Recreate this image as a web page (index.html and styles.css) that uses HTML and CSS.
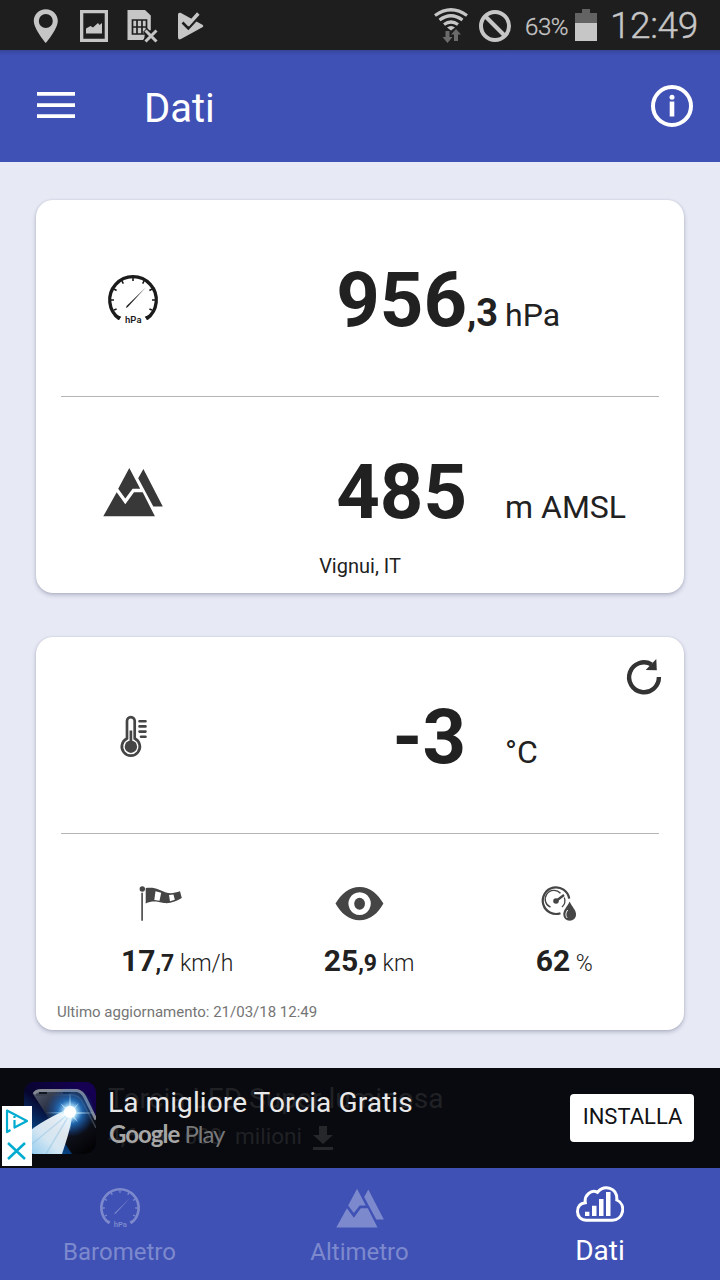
FILE: index.html
```html
<!DOCTYPE html>
<html lang="it">
<head>
<meta charset="utf-8">
<title>Dati</title>
<link rel="stylesheet" href="styles.css">
</head>
<body>
<header class="status">
  <svg class="status-left" viewBox="0 0 200 50" fill="#c6c6c6">
    <path fill-rule="evenodd" d="M26 9.3C19 9.3 14 14.5 14 21c0 8 12 22 12 22s12-14 12-22c0-6.500-5-11.700-12-11.700zM26 14a7 7 0 1 1 0 14 7 7 0 0 1 0-14z" transform="translate(-.2 0)"/>
    <path fill-rule="evenodd" d="M60 10h28v32H60zM63.300 13.300v25.400h21.400V13.300zM66 33.500v-5l4.500-2.500 2.500 1.500 5-4.500 1.500 2 2.500-2v10.500z"/>
    <path d="M107.500 10H125l5.800 5.500V30L125 33l-1 7h-16.500z"/>
    <path d="M112.500 20h14v14h-14zM117 20v14M122 20v14M112.500 27h14" fill="none" stroke="#1e1e1e" stroke-width="1.700"/>
    <path d="M125 30l12 12M137 30l-12 12" stroke="#1e1e1e" stroke-width="6"/>
    <path d="M125.500 30.500l11 11M136.500 30.500l-11 11" stroke="#c6c6c6" stroke-width="3"/>
    <path d="M158 15c0-2 1-2.700 3-2l20 11c3 1.700 3 2.300 0 4l-20 11c-2 1-3 0-3-2z"/>
    <path d="M162.500 22.500l5.800 5.800L181.500 14" fill="none" stroke="#1e1e1e" stroke-width="2.600"/>
    <path d="M165 19.500l4 4.500 9.300-10.500" fill="none" stroke="#c6c6c6" stroke-width="3.400"/>
  </svg>
  <svg class="status-net" viewBox="0 0 80 50" fill="none" stroke="#c6c6c6">
    <path d="M3 15.500q16-11.500 32 0M7.500 20q11.500-8.500 23 0M12 24.500q7-5 14 0" stroke-width="3.200"/>
    <path d="M15 27.500q4-3 8 0l-4 3z" fill="#c6c6c6" stroke="none"/>
    <path d="M13.500 31h4v6h3L15.500 43 10.500 37h3zM22 41h4v-6.500h3L24 29l-5 5.500h3z" fill="#6b6b6b" stroke="none"/>
    <circle cx="63" cy="26" r="14" stroke-width="4"/><path d="M53 16l20 20" stroke-width="4"/>
  </svg>
  <span class="percent">63%</span>
  <svg class="battery" viewBox="0 0 22 50"><path d="M7 9h8v4h7v10H0V13h7z" fill="#636363"/><path d="M0 23h22v18H0z" fill="#c6c6c6"/></svg>
  <time class="clock">12:49</time>
</header>

<div class="toolbar">
  <svg class="menu" viewBox="0 0 38 26" fill="#fff"><path d="M0 0h38v3.700H0zM0 11.200h38v3.700H0zM0 22.200h38V26H0z"/></svg>
  <h1 class="title">Dati</h1>
  <svg class="info" viewBox="0 0 44 44"><circle cx="22" cy="22" r="19" fill="none" stroke="#fff" stroke-width="4"/><circle cx="22" cy="13.300" r="2.500" fill="#fff"/><path d="M19.700 17.500h4.600v15h-4.600z" fill="#fff"/></svg>
</div>

<main class="content">
  <section class="card">
    <div class="reading">
      <svg class="icon dark" viewBox="0 0 60 60">
        <g id="gauge">
          <path class="gauge-ring" d="M16.2 48.700A23.300 23.300 0 1 1 43.800 48.700" fill="none" stroke="currentColor"/>
          <path d="M13.600 45.600l4 1.200-1.800 3zM46.400 45.600l-4 1.200 1.800 3z" fill="currentColor" stroke="currentColor"/>
          <path d="M30 8v3M19 11l1.300 2.600M41 11l-1.300 2.600M11 19l2.600 1.500M49 19l-2.600 1.500M8 30h3M52 30h-3M11 40l2.600-1M49 40l-2.600-1" stroke="currentColor" stroke-width="1.600"/>
          <path d="M42.900 17.200 24.800 36.900 22.900 38 23.600 35.900z" fill="currentColor"/>
          <text class="gauge-label" x="30.300" y="53.300" text-anchor="middle" fill="currentColor">hPa</text>
        </g>
      </svg>
      <span class="number">956</span><span class="decimal">,3</span><span class="unit">hPa</span>
    </div>
    <div class="reading altitude">
      <svg class="icon" viewBox="0 0 60 60">
        <path id="mountains" fill="currentColor" d="M.3 54.300 13.700 30.300 22.300 42.300 31 30.300H39.700L51.900 54.300zM26.300 6 37.200 26.800H29.600L22.300 36.400 15.200 26.800zM40.400 7 59.800 44.500H50.300L35.200 16.300z"/>
      </svg>
      <span class="number">485</span><span class="decimal"></span><span class="unit">m AMSL</span>
    </div>
    <p class="place">Vignui, IT</p>
  </section>

  <section class="card">
    <svg class="refresh" viewBox="0 0 40 40"><path d="M34.900 21A14.900 14.900 0 1 1 27.500 8.400" fill="none" stroke="#333" stroke-width="4.400"/><path d="M32.300 3 32.800 14.200 21.700 14z" fill="#333"/></svg>
    <div class="reading temperature">
      <svg class="icon" viewBox="0 0 60 60" fill="none" stroke="currentColor">
        <path d="M24 31.500V14a3.800 3.800 0 0 1 7.700 0v17.500a9 9 0 1 1-7.700 0z" stroke-width="2.700"/>
        <circle cx="27.900" cy="39.700" r="6.200" fill="currentColor" stroke="none"/>
        <path d="M27.900 23.500v13" stroke-width="2.700"/>
        <path d="M36.500 14.300h6M36.500 19.400h6M36.500 24.600h6M38 29.700h4.500" stroke-width="2.600" stroke-linecap="round"/>
      </svg>
      <span class="number">-3</span><span class="decimal"></span><span class="unit">°C</span>
    </div>
    <div class="metrics">
      <div class="metric wind">
        <svg class="icon" viewBox="0 0 60 60" fill="currentColor">
          <circle cx="11.300" cy="15" r="2.700"/><path d="M10.300 18.700h1.600v28h-1.600z"/>
          <path fill-rule="evenodd" d="M14.700 14C24 12.500 29 16 35 18.500 41 20 44 18.500 49 17.200L50.800 24C44 28 39 29.700 33 29 26 27.500 21 26.500 14.700 29.500zM24.500 17.200 23.300 26 28.500 26.700 30.200 18.800zM38 21 39 27.200 43.800 25.800 42.500 20.500z"/>
        </svg>
        <p class="value"><b>17<small>,7</small></b> km/h</p>
      </div>
      <div class="metric visibility">
        <svg class="icon" viewBox="0 0 60 60" fill="currentColor">
          <path fill-rule="evenodd" d="M5.500 29.600C11 20 19 12.900 29.600 12.900S48 20 53.400 29.600C48 39.500 40 46.300 29.600 46.300S11 39.500 5.500 29.600zM29.600 18.300a11.200 11.300 0 1 0 .01 0z"/>
          <ellipse cx="29.600" cy="29.700" rx="5.400" ry="6"/>
        </svg>
        <p class="value"><b>25<small>,9</small></b> km</p>
      </div>
      <div class="metric humidity">
        <svg class="icon" viewBox="0 0 60 60" fill="none" stroke="currentColor">
          <path d="M40.200 24.600A13.300 13.300 0 1 0 31.500 39.200" stroke-width="2.200"/>
          <path d="M21.500 33.200A8.800 8.800 0 1 1 31.500 19.200M35.300 23.500A8.800 8.800 0 0 1 33 33" stroke-width="1.300"/>
          <circle cx="27" cy="27" r="2.800" fill="currentColor" stroke="none"/><path d="M27 27l8-6" stroke-width="2.300"/>
          <path d="M40.700 27.500C38 33 34.300 36 34.300 40.500a6.400 6.200 0 0 0 12.800 0C47.100 36 43 33 40.700 27.500z" fill="currentColor" stroke="none"/>
          <path d="M38.700 36c-2.300 3-2.200 6-.5 8" stroke="#fff" stroke-width="1"/>
        </svg>
        <p class="value"><b>62</b> %</p>
      </div>
    </div>
    <p class="updated">Ultimo aggiornamento: 21/03/18 12:49</p>
  </section>
</main>

<aside class="ad">
  <svg class="ad-art" viewBox="0 0 72 72">
    <defs>
      <linearGradient id="sky" x1=".7" y1="0" x2="0" y2="1"><stop offset="0" stop-color="#150052"/><stop offset=".4" stop-color="#07052d"/><stop offset="1" stop-color="#0879c9"/></linearGradient>
      <linearGradient id="phone" x1="0" y1="0" x2=".8" y2="1"><stop offset="0" stop-color="#555d70"/><stop offset=".35" stop-color="#202638"/><stop offset="1" stop-color="#030306"/></linearGradient>
      <radialGradient id="glow"><stop offset="0" stop-color="#fff"/><stop offset=".22" stop-color="#bceaff"/><stop offset=".5" stop-color="#258cf0" stop-opacity=".65"/><stop offset="1" stop-color="#105bd8" stop-opacity="0"/></radialGradient>
      <linearGradient id="beam" x1="1" y1="0" x2="0" y2="1"><stop offset="0" stop-color="#fff"/><stop offset=".6" stop-color="#e6f4fc"/><stop offset="1" stop-color="#91cff3"/></linearGradient>
      <clipPath id="tile"><rect width="72" height="72" rx="10"/></clipPath>
    </defs>
    <g clip-path="url(#tile)">
      <path d="M0 0h72v72H0z" fill="url(#sky)"/>
      <path d="M9 12q1-4 7-4h38q6 1 9 7l9 20v37H48z" fill="url(#phone)"/>
      <path d="M10 12q2-3.500 7-3.500h36q5 1 8 7l11 22" fill="none" stroke="#858994" stroke-width="3"/>
      <path d="M12 13h37q6 1 9 6l14 27" fill="none" stroke="#3b404c" stroke-width="1.500"/>
      <path d="M15 11h8M39 11h8" stroke="#111722" stroke-width="2"/>
      <circle cx="46" cy="30" r="25" fill="url(#glow)"/>
      <path d="M44 27C31 33 12 42 0 54V72H38C43 57 48 41 48 32z" fill="url(#beam)" opacity=".92"/>
      <path d="M42 34 2 67M44 35 22 72" stroke="#79b5df" stroke-width="1.500" opacity=".35"/>
      <path d="M46 10 47 28 55 21 48.500 30 71 31 48.500 32 54 40 47 34 46 50 45 34 37 38 43.500 31.500 21 31 43.500 30 36 21 45 28z" fill="#c7eeff" opacity=".75"/>
      <circle cx="46" cy="30" r="6" fill="#fff"/>
    </g>
  </svg>
  <div class="ad-copy">
    <div class="previous"><p>Torcia LED Super luminosa</p><p class="downloads">4,6 ★ 600 milioni</p>
      <svg class="download" viewBox="0 0 20 25"><path d="M6 0h8v9h6L10 18 0 9h6zM0 21h20v3H0z" fill="#26272a"/></svg>
    </div>
    <div class="current"><p class="headline">La migliore Torcia Gratis</p><p class="store"><b>Google</b> <span>Play</span></p></div>
  </div>
  <button class="install">INSTALLA</button>
  <svg class="adchoices" viewBox="0 0 30 60" fill="none" stroke="#00abd0" stroke-width="2.200">
    <path d="M0 0h30v60H0z" fill="#fff" stroke="none"/>
    <path d="M8.500 24 5 26V4.500L25 15 12.500 21.500V14M12.500 10v2" stroke-linejoin="round"/><path d="M6 37l17 16M23 37L6 53" stroke-width="2.500"/>
  </svg>
</aside>

<nav class="tabs">
  <a class="tab"><svg class="tab-icon" viewBox="0 0 60 60"><use href="#gauge"/></svg><span>Barometro</span></a>
  <a class="tab"><svg class="tab-icon" viewBox="0 0 60 60"><use href="#mountains"/></svg><span>Altimetro</span></a>
  <a class="tab active">
    <svg class="tab-icon" viewBox="0 0 48 48"><path d="M10.500 36.300C5 36.300 1.500 32.500 1.500 27.500c0-5 3-8.300 7.800-8.800C8 11.500 15 5 21.500 8.300 28 .5 41.500 3 40.800 16c10 4.500 6.500 20.300-4.500 20.300z" fill="none" stroke="#fff" stroke-width="3"/><path d="M9 27.700h4.400v4.200H9zM16 21.700h4.500v10.200H16zM23 15h4.500v16.900H23zM30 8h4.500v23.900H30z" fill="#fff"/></svg>
    <span>Dati</span>
  </a>
</nav>
</body>
</html>
```
FILE: styles.css
```css
* { box-sizing: border-box; }
body {
  margin: 0;
  width: 720px;
  height: 1280px;
  overflow: hidden;
  display: flex;
  flex-direction: column;
  background: #e7e9f5;
  color: #212121;
  font-family: Roboto, sans-serif;
}
p, h1 { margin: 0; font-weight: 400; }
svg { display: block; flex: none; }

.status {
  height: 50px;
  flex: none;
  display: flex;
  background: #1e1e1e;
  color: #c6c6c6;
  line-height: 50px;
}
.status-left { width: 200px; height: 50px; margin-left: 20px; }
.status-net { width: 80px; height: 50px; margin-left: 212px; }
.percent { width: 63px; padding: 2px 0 0 13px; font-size: 24px; font-weight: 300; letter-spacing: -.4px; -webkit-text-stroke: .3px; }
.battery { width: 22px; height: 50px; }
.clock { padding: 1px 0 0 13px; font-size: 37px; font-weight: 300; letter-spacing: -.4px; -webkit-text-stroke: .4px; }

.toolbar {
  height: 112px;
  flex: none;
  display: flex;
  align-items: center;
  padding: 0 26px 0 37px;
  background: linear-gradient(#36449a, #3f51b5 5px);
  color: #fff;
}
.menu { width: 38px; height: 26px; margin-top: -2px; }
.title { flex: 1; padding: 6px 0 0 69px; font-size: 40px; line-height: 48px; }
.info { width: 44px; height: 44px; }

.content {
  flex: 1;
  display: flex;
  flex-direction: column;
  gap: 44px;
  padding: 38px 36px 0;
}
.card {
  position: relative;
  height: 393px;
  flex: none;
  border-radius: 17px;
  background: #fff;
  box-shadow: 0 2px 4px rgba(40, 45, 80, .28), 0 0 2px rgba(40, 45, 80, .12);
}
.reading {
  display: grid;
  grid-template-columns: 169px 237px 38px 1fr;
  align-items: baseline;
  height: 197px;
  margin: 0 25px;
  padding-top: 62px;
  border-bottom: 1px solid #b5b5b5;
}
.reading.altitude { height: 157px; padding-top: 57px; border: 0; }
.reading.temperature { grid-template-columns: 169px 236px 39px 1fr; }
.icon { width: 60px; height: 60px; color: #454545; }
.icon.dark { color: #1b1b1b; }
.reading .icon { align-self: start; margin: 8px 0 0 42px; }
.reading.altitude .icon { color: #383838; }
.gauge-ring { stroke-width: 3.3px; }
.gauge-label { font: 600 9.5px Roboto, sans-serif; }
.number { text-align: right; font-size: 76px; line-height: 76px; font-weight: 700; }
.decimal { font-size: 38px; line-height: 38px; font-weight: 700; }
.unit { font-size: 32px; line-height: 38px; }
.place { font-size: 20px; line-height: 24px; text-align: center; }

.refresh { position: absolute; top: 19px; right: 20px; width: 40px; height: 40px; }
.metrics {
  display: grid;
  grid-template-columns: repeat(3, 1fr);
  margin: 0 25px;
  padding-top: 40px;
}
.metric { display: flex; flex-direction: column; align-items: center; gap: 9px; height: 105px; }
.value { font-size: 23px; line-height: 36px; font-weight: 300; white-space: nowrap; }
.value b { font-size: 30px; font-weight: 700; }
.value small { font-size: 23px; }
.wind .value { padding-left: 33px; }
.visibility .value { padding-left: 18px; }
.humidity .value { padding-left: 10px; }
.updated { margin: 23px 0 0 21px; color: #757575; font-size: 15px; line-height: 20px; }

.ad {
  position: relative;
  height: 100px;
  flex: none;
  display: flex;
  padding: 14px 26px 0 24px;
  background: #090a0f;
}
.ad-art { width: 72px; height: 72px; }
.ad-copy { flex: 1; display: grid; margin-left: 12px; }
.previous, .current { grid-area: 1 / 1; }
.previous { position: relative; color: #202125; font-size: 28px; line-height: 34px; letter-spacing: .05px; }
.downloads { padding-top: 3px; font-size: 22.5px; word-spacing: 7px; }
.download { position: absolute; left: 205px; top: 44px; width: 20px; height: 25px; }
.current { position: relative; padding-top: 4px; color: #e8e8e8; }
.headline { font-size: 28px; line-height: 34px; letter-spacing: .1px; }
.store { padding-left: 1px; font-family: Lato, sans-serif; font-size: 24px; line-height: 28px; letter-spacing: -1px; color: #a6a6a6; }
.store b { font-weight: 700; }
.store span { color: #77787a; }
.install {
  width: 124px;
  height: 48px;
  margin-top: 12px;
  padding: 0 0 3px 1px;
  border: 0;
  border-radius: 4px;
  background: #fff;
  color: #111216;
  font: 22px Roboto, sans-serif;
}
.adchoices { position: absolute; left: 2px; top: 38px; width: 30px; height: 60px; }

.tabs {
  height: 112px;
  flex: none;
  display: grid;
  grid-template-columns: repeat(3, 1fr);
  background: #3f51b5;
}
.tab {
  display: flex;
  flex-direction: column;
  align-items: center;
  padding-top: 16px;
  color: #7d89cd;
  font-size: 24px;
  line-height: 36px;
}
.tab span { margin-right: 1px; }
.tab-icon { width: 48px; height: 48px; margin-bottom: 2px; }
.tab.active { color: #fff; font-size: 28px; }
.tab.active span { line-height: 34px; margin: 0; }
```
